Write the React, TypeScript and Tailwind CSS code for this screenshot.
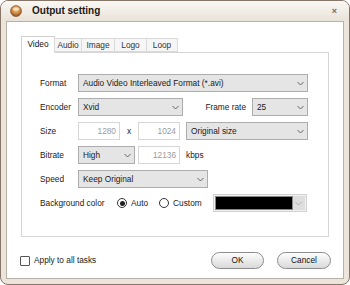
import React from "react";

const font = { fontFamily: '"Liberation Sans", Arial, sans-serif' };

function Chevron({ color = "#555" }: { color?: string }) {
  return (
    <svg width="7" height="5" viewBox="0 0 7 5" className="shrink-0">
      <path d="M0.5 1 L3.5 4 L6.5 1" fill="none" stroke={color} strokeWidth="0.9" />
    </svg>
  );
}

function Select({ w, text }: { w: string; text: string }) {
  return (
    <div className={`${w} h-[18px] border border-[#adadad] bg-[#e5e5e5] flex items-center pl-[4px] pr-[3px] justify-between`}>
      <span className="text-[8.3px] text-[#1a1a1a] leading-none">{text}</span>
      <Chevron />
    </div>
  );
}

function Input({ w, text }: { w: string; text: string }) {
  return (
    <div className={`${w} h-[18px] border border-[#d6d6d6] bg-white flex items-center justify-end pr-[3px]`}>
      <span className="text-[8.3px] text-[#9a9a9a] leading-none">{text}</span>
    </div>
  );
}

function Label({ text, w = "w-[38px]" }: { text: string; w?: string }) {
  return <div className={`${w} shrink-0 text-[8.3px] text-[#1a1a1a] leading-none`}>{text}</div>;
}

function Radio({ checked }: { checked?: boolean }) {
  return (
    <div className="w-[10px] h-[10px] rounded-full border border-[#333] bg-white flex items-center justify-center shrink-0">
      {checked && <div className="w-[5px] h-[5px] rounded-full bg-[#222]" />}
    </div>
  );
}

export default function App() {
  const tabs = [
    { name: "Video", w: "w-[34px]" },
    { name: "Audio", w: "w-[28px]" },
    { name: "Image", w: "w-[34px]" },
    { name: "Logo", w: "w-[33px]" },
    { name: "Loop", w: "w-[32px]" },
  ];
  return (
    <div style={font} className="w-[350px] h-[285px] bg-white">
      <div className="w-[350px] h-[285px] border border-[#86766a] rounded-[8px] bg-[#ebe5dc] flex flex-col overflow-hidden">
        {/* Title bar */}
        <div className="h-[20px] shrink-0 bg-gradient-to-b from-[#faf8f4] to-[#e9e2d8] flex items-center pl-[9px] pr-[12px]">
          <svg width="12" height="12" viewBox="0 0 12 12" className="shrink-0">
            <defs>
              <radialGradient id="g" cx="50%" cy="35%" r="65%">
                <stop offset="0%" stopColor="#f6d9a8" />
                <stop offset="55%" stopColor="#d08c45" />
                <stop offset="100%" stopColor="#8a4e1c" />
              </radialGradient>
            </defs>
            <circle cx="6" cy="6" r="5.5" fill="url(#g)" stroke="#7a4a20" strokeWidth="0.6" />
            <ellipse cx="6" cy="4" rx="3.2" ry="1.6" fill="#fbe9c9" opacity="0.7" />
          </svg>
          <span className="ml-[10px] text-[10px] font-bold text-[#1a1a1a] leading-none">Output setting</span>
          <span className="ml-auto text-[9px] text-[#7a6a60] leading-none font-bold">×</span>
        </div>
        {/* Body */}
        <div className="flex-1 px-[5px] pb-[5px] flex">
          <div className="flex-1 border border-[#b9b1a7] bg-white flex flex-col pt-[14px]">
            <div className="px-[14px]">
              {/* Tabs */}
              <div className="flex items-end h-[16px] relative z-10">
                {tabs.map((t, i) => (
                  <div
                    key={t.name}
                    className={
                      i === 0
                        ? `${t.w} h-[17px] -mb-px border border-[#d0d0d0] border-b-white bg-white flex items-center justify-center text-[8.3px] text-[#111] leading-none`
                        : `${t.w} h-[14px] -ml-px border border-[#dadada] bg-[#f6f6f6] flex items-center justify-center text-[8.3px] text-[#333] leading-none`
                    }
                  >
                    {t.name}
                  </div>
                ))}
              </div>
              {/* Panel */}
              <div className="h-[185px] border border-[#d5d5d5] bg-white pt-[21px] pl-[18px] flex flex-col gap-[6px]">
                <div className="flex items-center h-[18px]">
                  <Label text="Format" />
                  <Select w="w-[230px]" text="Audio Video Interleaved Format (*.avi)" />
                </div>
                <div className="flex items-center h-[18px]">
                  <Label text="Encoder" />
                  <Select w="w-[105px]" text="Xvid" />
                  <div className="w-[69px] text-right pr-[6px] text-[8.3px] text-[#1a1a1a] leading-none">Frame rate</div>
                  <Select w="w-[56px]" text="25" />
                </div>
                <div className="flex items-center h-[18px]">
                  <Label text="Size" />
                  <Input w="w-[42px]" text="1280" />
                  <div className="w-[18px] text-center text-[8.3px] text-[#1a1a1a] leading-none">x</div>
                  <Input w="w-[42px]" text="1024" />
                  <div className="w-[6px]" />
                  <Select w="w-[122px]" text="Original size" />
                </div>
                <div className="flex items-center h-[18px]">
                  <Label text="Bitrate" />
                  <Select w="w-[57px]" text="High" />
                  <div className="w-[3px]" />
                  <Input w="w-[42px]" text="12136" />
                  <div className="ml-[6px] text-[8.3px] text-[#1a1a1a] leading-none">kbps</div>
                </div>
                <div className="flex items-center h-[18px]">
                  <Label text="Speed" />
                  <Select w="w-[130px]" text="Keep Original" />
                </div>
                <div className="flex items-center h-[18px]">
                  <Label text="Background color" w="w-[77px]" />
                  <Radio checked />
                  <span className="ml-[4px] text-[8.3px] text-[#1a1a1a] leading-none">Auto</span>
                  <div className="ml-[11px]">
                    <Radio />
                  </div>
                  <span className="ml-[4px] text-[8.3px] text-[#1a1a1a] leading-none">Custom</span>
                  <div className="ml-[11px] w-[94px] h-[18px] border border-[#d2d2d2] bg-[#f0f0f0] flex items-center p-[1px]">
                    <div className="flex-1 h-full border border-[#888] bg-black" />
                    <div className="w-[12px] h-full bg-[#dedede] flex items-center justify-center">
                      <Chevron color="#aaa" />
                    </div>
                  </div>
                </div>
              </div>
            </div>
            {/* Bottom row */}
            <div className="mt-[15px] pl-[13px] pr-[12px] flex items-center h-[17px]">
              <div className="w-[10px] h-[10px] border border-[#555] bg-white rounded-[1px]" />
              <span className="ml-[4px] text-[8.3px] text-[#1a1a1a] leading-none">Apply to all tasks</span>
              <div className="ml-auto w-[53px] h-[17px] rounded-full border border-[#8c8c8c] bg-gradient-to-b from-[#fdfdfd] to-[#d9d9d9] flex items-center justify-center text-[8.3px] text-[#111] leading-none">
                OK
              </div>
              <div className="ml-[13px] w-[54px] h-[17px] rounded-full border border-[#8c8c8c] bg-gradient-to-b from-[#fdfdfd] to-[#d9d9d9] flex items-center justify-center text-[8.3px] text-[#111] leading-none">
                Cancel
              </div>
            </div>
          </div>
        </div>
      </div>
    </div>
  );
}
